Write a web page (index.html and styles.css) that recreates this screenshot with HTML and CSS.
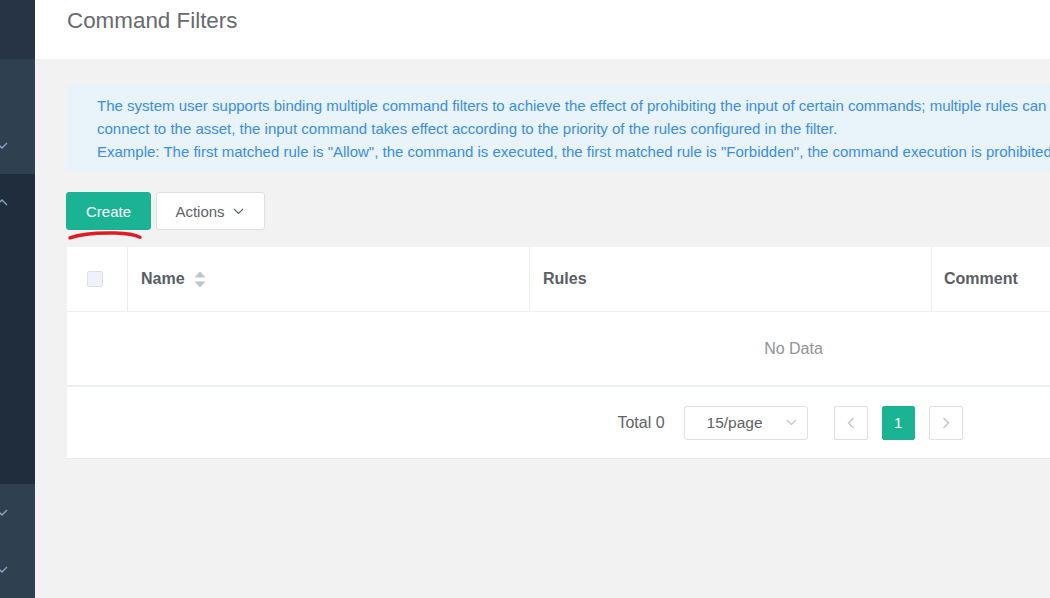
FILE: index.html
```html
<!DOCTYPE html>
<html lang="en">
<head>
<meta charset="utf-8">
<title>Command Filters</title>
<link rel="stylesheet" href="styles.css">
</head>
<body>
<aside class="sidebar">
  <div class="sb-block sb-top"></div>
  <div class="sb-block sb-light sb-b">
    <div class="sb-item"></div>
    <div class="sb-item"><svg class="chev" width="12" height="7" viewBox="0 0 12 7"><path d="M1 1 L6 6 L11 1" /></svg></div>
  </div>
  <div class="sb-block sb-dark sb-c">
    <div class="sb-item"><svg class="chev" width="12" height="7" viewBox="0 0 12 7"><path d="M1 6 L6 1 L11 6" /></svg></div>
  </div>
  <div class="sb-block sb-light sb-d">
    <div class="sb-item"><svg class="chev" width="12" height="7" viewBox="0 0 12 7"><path d="M1 1 L6 6 L11 1" /></svg></div>
    <div class="sb-item"><svg class="chev" width="12" height="7" viewBox="0 0 12 7"><path d="M1 1 L6 6 L11 1" /></svg></div>
  </div>
</aside>
<div class="main">
  <header class="page-header">
    <h1 class="page-title">Command Filters</h1>
  </header>
  <section class="content">
    <div class="alert">
      <div class="alert-line">The system user supports binding multiple command filters to achieve the effect of prohibiting the input of certain commands; multiple rules can</div>
      <div class="alert-line">connect to the asset, the input command takes effect according to the priority of the rules configured in the filter.</div>
      <div class="alert-line">Example: The first matched rule is "Allow", the command is executed, the first matched rule is "Forbidden", the command execution is prohibited</div>
    </div>
    <div class="toolbar">
      <div class="create-wrap">
        <button class="btn btn-primary">Create</button>
        <svg class="scribble" width="78" height="12" viewBox="0 0 78 12"><path d="M3 7.8 C 12 4.5, 30 2.6, 48 3 C 60 3.3, 68 4.6, 73 7.2" /></svg>
      </div>
      <button class="btn btn-default">Actions <svg class="btn-chev" width="11" height="7" viewBox="0 0 11 7"><path d="M1 1 L5.5 5.5 L10 1" /></svg></button>
    </div>
    <div class="table-card">
      <div class="thead">
        <div class="th th-check"><span class="checkbox"></span></div>
        <div class="th th-name">Name
          <span class="sort">
            <svg width="12" height="17" viewBox="0 0 12 17"><path d="M6 0.5 L11.5 6.5 H0.5 Z" /><path d="M6 16.5 L11.5 10.5 H0.5 Z" /></svg>
          </span>
        </div>
        <div class="th th-rules">Rules</div>
        <div class="th th-comment">Comment</div>
      </div>
      <div class="tbody-empty">No Data</div>
      <div class="pager">
        <span class="total">Total 0</span>
        <div class="select">15/page <svg class="select-chev" width="11" height="7" viewBox="0 0 11 7"><path d="M1 1 L5.5 5.5 L10 1" /></svg></div>
        <button class="pg-btn"><svg width="8" height="12" viewBox="0 0 8 12"><path d="M6.5 1 L1.5 6 L6.5 11" /></svg></button>
        <button class="pg-num">1</button>
        <button class="pg-btn"><svg width="8" height="12" viewBox="0 0 8 12"><path d="M1.5 1 L6.5 6 L1.5 11" /></svg></button>
      </div>
    </div>
  </section>
</div>
</body>
</html>
```
FILE: styles.css
```css
html, body {
  margin: 0;
  padding: 0;
}
body {
  display: flex;
  width: 1050px;
  height: 598px;
  overflow: hidden;
  background: #f2f2f2;
  font-family: "Liberation Sans", Arial, sans-serif;
  font-size: 14px;
  color: #606266;
}
.sidebar {
  flex: none;
  width: 35px;
  height: 598px;
  display: flex;
  flex-direction: column;
  background: #1f2d3d;
}
.sb-block { flex: none; }
.sb-top { height: 59px; background: #263445; }
.sb-light { background: #2f4050; }
.sb-dark { background: #1f2d3d; }
.sb-b { height: 115px; display: flex; flex-direction: column; justify-content: flex-end; }
.sb-c { height: 310px; }
.sb-d { flex: 1; }
.sb-item {
  height: 57px;
  display: flex;
  align-items: center;
}
.chev {
  margin-left: -4px;
  fill: none;
  stroke: #8da6c8;
  stroke-width: 1.3;
}
.main {
  flex: none;
  width: 1516px;
  display: flex;
  flex-direction: column;
}
.page-header {
  height: 59px;
  background: #fff;
  padding-left: 32px;
  box-sizing: border-box;
}
.page-title {
  margin: 0;
  padding-top: 8px;
  font-weight: 400;
  font-size: 22.4px;
  line-height: 26px;
  color: #676a6c;
}
.content {
  padding: 25px 31px;
}
.alert {
  background: #e8f3fa;
  border-radius: 4px;
  padding: 10px 31px 8px;
  color: #3a8ee6;
  font-size: 15px;
  line-height: 23px;
  white-space: nowrap;
  overflow: hidden;
}
.toolbar {
  display: flex;
  gap: 5px;
  margin-top: 21px;
}
.create-wrap {
  position: relative;
}
.btn {
  height: 38px;
  box-sizing: border-box;
  border-radius: 3px;
  font-family: inherit;
  font-size: 15px;
  padding: 0;
  display: flex;
  align-items: center;
  justify-content: center;
}
.btn-primary {
  width: 85px;
  background: #1ab394;
  border: 1px solid #1ab394;
  color: #fff;
}
.btn-default {
  width: 109px;
  background: #fff;
  border: 1px solid #dcdfe6;
  color: #606266;
  gap: 8px;
  padding-right: 2px;
}
.btn-chev, .select-chev {
  fill: none;
  stroke: #606266;
  stroke-width: 1.1;
}
.select-chev { stroke: #c0c4cc; }
.scribble {
  position: absolute;
  left: 1px;
  top: 38px;
  fill: none;
  stroke: #e11b22;
  stroke-width: 3.4;
  stroke-linecap: round;
}
.table-card {
  margin-top: 17px;
  margin-left: 1px;
  background: #fff;
  border-bottom: 1px solid #e6ebf0;
}
.thead {
  display: flex;
  height: 64px;
  border-bottom: 1px solid #ebeef5;
}
.th {
  box-sizing: border-box;
  display: flex;
  align-items: center;
  font-weight: 700;
  font-size: 16px;
  color: #5a5e66;
  border-right: 1px solid #ebeef5;
  padding-left: 13px;
}
.th-check { width: 61px; padding-left: 20px; }
.th-name { width: 402px; gap: 9px; }
.th-rules { width: 402px; }
.th-comment { flex: 1; border-right: none; padding-left: 12px; }
.checkbox {
  width: 16px;
  height: 16px;
  box-sizing: border-box;
  background: #edf2fc;
  border: 1px solid #dcdfe6;
  border-radius: 2px;
}
.sort svg { display: block; fill: #c0c4cc; }
.tbody-empty {
  height: 73px;
  display: flex;
  align-items: center;
  justify-content: center;
  color: #909399;
  font-size: 16px;
  border-bottom: 2px solid #ebeef5;
}
.pager {
  height: 71px;
  display: flex;
  align-items: center;
  justify-content: center;
  padding-right: 7px;
}
.total { margin-right: 19px; color: #606266; font-size: 16px; }
.select {
  width: 124px;
  height: 34px;
  box-sizing: border-box;
  border: 1px solid #dcdfe6;
  border-radius: 3px;
  display: flex;
  align-items: center;
  padding-left: 22px;
  padding-right: 10px;
  justify-content: space-between;
  margin-right: 26px;
  font-size: 15.5px;
}
.pg-btn, .pg-num {
  width: 34px;
  height: 34px;
  box-sizing: border-box;
  border: 1px solid #dcdfe6;
  border-radius: 2px;
  background: #fff;
  padding: 0;
  display: flex;
  align-items: center;
  justify-content: center;
  font-family: inherit;
  font-size: 15px;
}
.pg-btn svg { fill: none; stroke: #c0c4cc; stroke-width: 1.4; }
.pg-num {
  width: 33px;
  margin: 0 14px;
  background: #1ab394;
  border-color: #1ab394;
  color: #fff;
}
```
